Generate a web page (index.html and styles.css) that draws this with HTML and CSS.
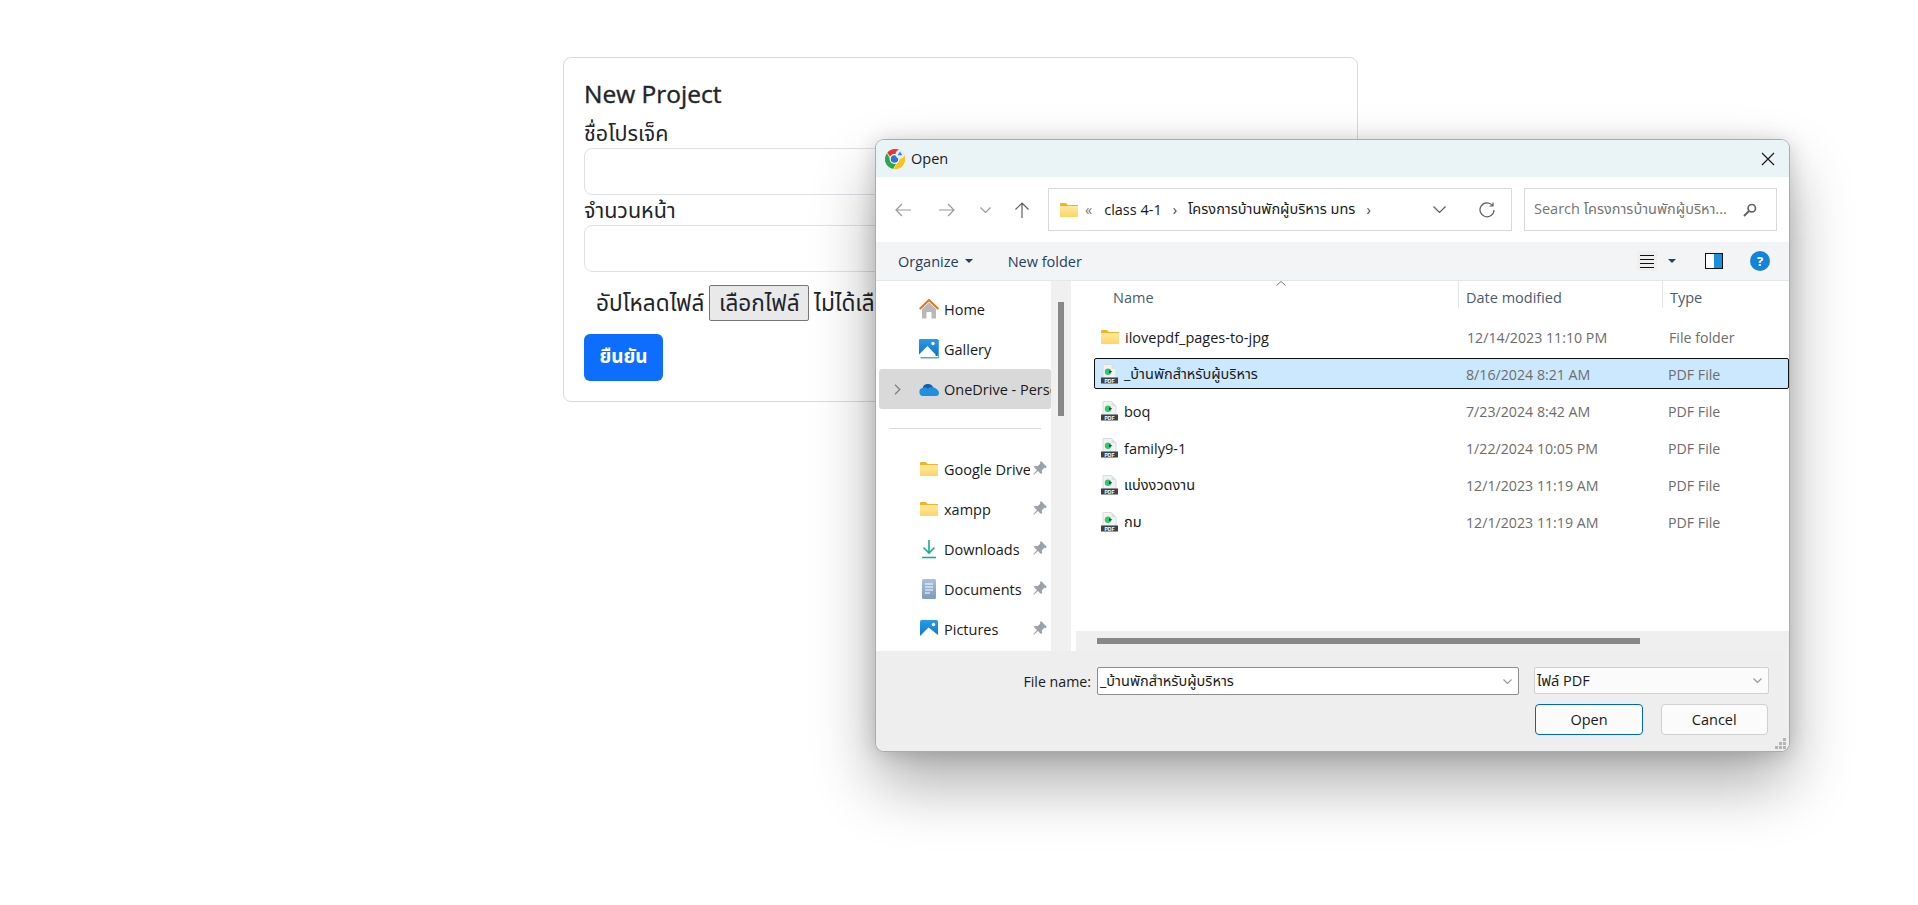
FILE: index.html
```html
<!DOCTYPE html>
<html lang="th">
<head>
  <meta charset="UTF-8" />
  <title>New Project</title>
  <link rel="stylesheet" href="styles.css">
</head>
<body>
  <svg class="sprites" width="0" height="0">
    <defs>
      <linearGradient id="folderFill" x1="0" y1="0" x2="0" y2="1">
        <stop offset="0" stop-color="#ffe9a0"/>
        <stop offset="1" stop-color="#fcd565"/>
      </linearGradient>
      <linearGradient id="paneFill" x1="0" y1="0" x2="0" y2="1">
        <stop offset="0" stop-color="#2b9be6"/>
        <stop offset="1" stop-color="#0d74c9"/>
      </linearGradient>
      <linearGradient id="docFill" x1="0" y1="0" x2="0" y2="1">
        <stop offset="0" stop-color="#a9c0da"/>
        <stop offset="1" stop-color="#7d9cc0"/>
      </linearGradient>
    </defs>
    <symbol id="folder" viewBox="0 0 18 14">
      <path d="M0 1.2C0 .5.5 0 1.2 0h4.6l2 2H18v2H0z" fill="#f5b324"/>
      <path d="M0 3h18v10c0 .6-.4 1-1 1H1c-.6 0-1-.4-1-1z" fill="url(#folderFill)"/>
    </symbol>
    <symbol id="pdf" viewBox="0 0 17 20">
      <path d="M2 .5h8.500L15 5v9H2z" fill="#f2f2f2" stroke="#dcdcdc"/>
      <path d="M10.500 .5V5H15z" fill="#dfdfdf"/>
      <circle cx="7" cy="7.800" r="3.200" fill="#2ec870"/>
      <path d="M8 6.300l3.400 1.500-3.400 1.500z" fill="#24384a"/>
      <rect x="0" y="13.500" width="17" height="6" fill="#3d4248"/>
    </symbol>
    <symbol id="pin" viewBox="0 0 14 14">
      <path d="M8 0L14 6L12.400 7L11.200 6.700L8.800 9.600L9.200 12L7.900 13.100L5 10L.9 13.800L.3 13.200L4 9L.9 6.100L2 4.800L4.400 5.200L7.300 2.800L7 1.600Z" fill="#9aa1a7"/>
    </symbol>
  </svg>

  <main class="page">
    <form class="card">
      <h1 class="card-title">New Project</h1>
      <label class="field-label">ชื่อโปรเจ็ค</label>
      <input class="field-input" type="text">
      <label class="field-label">จำนวนหน้า</label>
      <input class="field-input" type="text">
      <div class="upload-row">
        <span>อัปโหลดไฟล์</span>
        <span class="file-btn">เลือกไฟล์</span>
        <span>ไม่ได้เลือกไฟล์ใด</span>
      </div>
      <button class="submit-btn" type="button">ยืนยัน</button>
    </form>
  </main>

  <section class="dialog">
    <div class="titlebar">
      <svg class="chrome-icon" viewBox="0 0 20 20" width="20" height="20">
        <path d="M10 0a10 10 0 0 1 8.660 5H10a5 5 0 0 0-4.700 3.300L2.300 3.500A10 10 0 0 1 10 0z" fill="#e5392f"/>
        <path d="M1.900 4.200L6.200 11.500a5 5 0 0 0 4.800 3.400L8 20A10 10 0 0 1 1.900 4.200z" fill="#30a64c"/>
        <path d="M18.700 5A10 10 0 0 1 8.700 20l4.300-7.500a5 5 0 0 0 0-7.500z" fill="#fbc21a"/>
        <circle cx="9.500" cy="10" r="4.900" fill="#fff"/>
        <circle cx="9.500" cy="10" r="3.800" fill="#2f74d8"/>
        <circle cx="15" cy="5.300" r="4.500" fill="#e4eef6"/>
        <path d="M15 2.500l2.400 3.800h-4.800z" fill="#3f7fdc"/>
      </svg>
      <span class="titlebar-text">Open</span>
      <svg class="close-icon" viewBox="0 0 14 14" width="14" height="14"><path d="M1 1l12 12M13 1L1 13" stroke="#1a1a1a" stroke-width="1.200" fill="none"/></svg>
    </div>

    <div class="navbar">
      <svg class="nav-back" viewBox="0 0 16 14" width="16" height="14"><path d="M7 1L1 7l6 6M1 7h15" class="line-grey"/></svg>
      <svg class="nav-forward" viewBox="0 0 16 14" width="16" height="14"><path d="M9 1l6 6-6 6M15 7H0" class="line-grey"/></svg>
      <svg class="nav-down" viewBox="0 0 11 6" width="11" height="6"><path d="M.5.5l5 5 5-5" class="line-grey"/></svg>
      <svg class="nav-up" viewBox="0 0 16 16" width="16" height="16"><path d="M1.500 7.500L8 1l6.500 6.500M8 1v15" class="line-dark"/></svg>
      <div class="address">
        <svg class="address-folder" width="18" height="14"><use href="#folder"/></svg>
        <span class="crumb-more">«</span>
        <span class="crumb">class 4-1</span>
        <span class="crumb-sep">›</span>
        <span class="crumb">โครงการบ้านพักผู้บริหาร มทร</span>
        <span class="crumb-sep">›</span>
        <svg class="address-chevron" viewBox="0 0 13 7" width="13" height="7"><path d="M.5.500l6 6 6-6" class="line-dark"/></svg>
        <svg class="address-refresh" viewBox="0 0 16 16" width="16" height="16"><path d="M13.500 3.500A7 7 0 1 0 15 8M14 .5v3.500h-3.500" class="line-dark"/></svg>
      </div>
      <div class="search">
        <span class="search-text">Search โครงการบ้านพักผู้บริหา...</span>
        <svg viewBox="0 0 14 14" width="14" height="14"><circle cx="8.800" cy="5.200" r="3.700" fill="none" stroke="#5f6368" stroke-width="1.700"/><path d="M6 8L1 13" stroke="#5f6368" stroke-width="2"/></svg>
      </div>
    </div>

    <div class="toolbar">
      <span class="tool-btn">Organize</span>
      <span class="caret"></span>
      <span class="tool-btn new-folder">New folder</span>
      <span class="view-btn"><i></i><i></i><i></i><i></i></span>
      <span class="caret caret-view"></span>
      <span class="pane-btn"></span>
      <span class="help-btn">?</span>
    </div>

    <div class="browser">
      <nav class="sidebar">
        <div class="side-item">
          <svg class="side-icon" viewBox="0 0 20 20" width="20" height="20"><path d="M3 10l7-6.500 7 6.500v9.500h-4.500V13h-5v6.500H3z" fill="#b9b9b9"/><path d="M.7 10L10 1l9.300 9" fill="none" stroke="#e8711a" stroke-width="2"/></svg>
          <span>Home</span>
        </div>
        <div class="side-item">
          <svg class="side-icon" viewBox="0 0 20 20" width="20" height="20"><rect x="0" y="0" width="19" height="17" rx="1" fill="url(#paneFill)"/><path d="M19 1h1v17.500a1 1 0 0 1-1 1H1.500V18H19z" fill="#5aa7df"/><path d="M0 15.500L8.500 7l8 8.500V17H0z" fill="#fff"/><circle cx="14" cy="4.500" r="1.700" fill="#fff"/></svg>
          <span>Gallery</span>
        </div>
        <div class="side-item side-item-active">
          <svg class="side-chevron" viewBox="0 0 7 11" width="7" height="11"><path d="M1 .7L5.800 5.500 1 10.300" class="line-mid"/></svg>
          <svg class="side-icon" viewBox="0 0 20 13" width="20" height="13"><path d="M3.500 6a5.500 5.500 0 0 1 10.500-1.800A4 4 0 0 1 17 6.500L8 10z" fill="#0f5fb0"/><path d="M4 13a4 4 0 0 1-.4-7.900A4 4 0 0 1 9 5.700a3.500 3.500 0 0 1 5-.7c2.300-.4 6 1.800 6 5 0 1.700-1.300 3-3 3z" fill="#1f8fe0"/></svg>
          <span class="side-clip">OneDrive - Personal</span>
        </div>
        <div class="side-divider"></div>
        <div class="side-item">
          <svg class="side-icon" width="18" height="14"><use href="#folder"/></svg>
          <span class="side-clip-pin">Google Drive</span>
          <svg class="side-pin" width="14" height="14"><use href="#pin"/></svg>
        </div>
        <div class="side-item">
          <svg class="side-icon" width="18" height="14"><use href="#folder"/></svg>
          <span>xampp</span>
          <svg class="side-pin" width="14" height="14"><use href="#pin"/></svg>
        </div>
        <div class="side-item">
          <svg class="side-icon" viewBox="0 0 20 20" width="20" height="20"><path d="M10 1v13M4.500 8.500L10 14l5.500-5.500" fill="none" stroke="#14b08f" stroke-width="1.600"/><path d="M3 18.500h14" stroke="#14b08f" stroke-width="1.600"/></svg>
          <span>Downloads</span>
          <svg class="side-pin" width="14" height="14"><use href="#pin"/></svg>
        </div>
        <div class="side-item">
          <svg class="side-icon" viewBox="0 0 20 20" width="20" height="20"><rect x="3" y="0" width="14" height="20" rx="1.500" fill="url(#docFill)"/><path d="M6 5h8M6 8h8M6 11h8M6 14h5" stroke="#fff" stroke-width="1"/></svg>
          <span>Documents</span>
          <svg class="side-pin" width="14" height="14"><use href="#pin"/></svg>
        </div>
        <div class="side-item">
          <svg class="side-icon" viewBox="0 0 18 18" width="18" height="18"><rect width="18" height="18" rx="1.500" fill="url(#paneFill)"/><path d="M0 16L8.500 7.500 18 15v3H0z" fill="#fff"/><circle cx="13.500" cy="4.500" r="1.700" fill="#fff"/></svg>
          <span>Pictures</span>
          <svg class="side-pin" width="14" height="14"><use href="#pin"/></svg>
        </div>
      </nav>
      <div class="side-scroll"><div class="side-thumb"></div></div>

      <div class="files">
        <div class="file-head">
          <svg class="sort-arrow" viewBox="0 0 10 5" width="10" height="5"><path d="M.5 4.500L5 .5l4.500 4" fill="none" stroke="#777" stroke-width="1"/></svg>
          <span class="col-name">Name</span>
          <span class="col-date">Date modified</span>
          <span class="col-type">Type</span>
        </div>
        <div class="file-list">
          <div class="file-row">
            <svg class="file-icon folder-icon" width="18" height="14"><use href="#folder"/></svg>
            <span class="file-name">ilovepdf_pages-to-jpg</span>
            <span class="file-date">12/14/2023 11:10 PM</span>
            <span class="file-type">File folder</span>
          </div>
          <div class="file-row file-row-selected">
            <svg class="file-icon" viewBox="0 0 17 20" width="17" height="20"><use href="#pdf" width="17" height="20"/><text x="8.500" y="18.500" class="pdf-tag">PDF</text></svg>
            <span class="file-name">_บ้านพักสำหรับผู้บริหาร</span>
            <span class="file-date">8/16/2024 8:21 AM</span>
            <span class="file-type">PDF File</span>
          </div>
          <div class="file-row">
            <svg class="file-icon" viewBox="0 0 17 20" width="17" height="20"><use href="#pdf" width="17" height="20"/><text x="8.500" y="18.500" class="pdf-tag">PDF</text></svg>
            <span class="file-name">boq</span>
            <span class="file-date">7/23/2024 8:42 AM</span>
            <span class="file-type">PDF File</span>
          </div>
          <div class="file-row">
            <svg class="file-icon" viewBox="0 0 17 20" width="17" height="20"><use href="#pdf" width="17" height="20"/><text x="8.500" y="18.500" class="pdf-tag">PDF</text></svg>
            <span class="file-name">family9-1</span>
            <span class="file-date">1/22/2024 10:05 PM</span>
            <span class="file-type">PDF File</span>
          </div>
          <div class="file-row">
            <svg class="file-icon" viewBox="0 0 17 20" width="17" height="20"><use href="#pdf" width="17" height="20"/><text x="8.500" y="18.500" class="pdf-tag">PDF</text></svg>
            <span class="file-name">แบ่งงวดงาน</span>
            <span class="file-date">12/1/2023 11:19 AM</span>
            <span class="file-type">PDF File</span>
          </div>
          <div class="file-row">
            <svg class="file-icon" viewBox="0 0 17 20" width="17" height="20"><use href="#pdf" width="17" height="20"/><text x="8.500" y="18.500" class="pdf-tag">PDF</text></svg>
            <span class="file-name">กม</span>
            <span class="file-date">12/1/2023 11:19 AM</span>
            <span class="file-type">PDF File</span>
          </div>
        </div>
        <div class="hscroll"><div class="hscroll-thumb"></div></div>
      </div>
    </div>

    <div class="dialog-footer">
      <div class="footer-row">
        <span class="footer-label">File name:</span>
        <div class="name-box">
          <span class="box-text">_บ้านพักสำหรับผู้บริหาร</span>
          <svg viewBox="0 0 9 5" width="9" height="5"><path d="M.5.500l4 4 4-4" class="line-grey"/></svg>
        </div>
        <div class="type-box">
          <span class="box-text">ไฟล์ PDF</span>
          <svg viewBox="0 0 9 5" width="9" height="5"><path d="M.5.500l4 4 4-4" class="line-grey"/></svg>
        </div>
      </div>
      <div class="footer-row footer-actions">
        <button class="dlg-btn dlg-btn-primary" type="button">Open</button>
        <button class="dlg-btn" type="button">Cancel</button>
      </div>
      <svg class="grip" viewBox="0 0 11 11" width="11" height="11">
        <path d="M8 0h3v3H8zM4 4h3v3H4zM8 4h3v3H8zM0 8h3v3H0zM4 8h3v3H4zM8 8h3v3H8z" fill="#b4b4b4"/>
      </svg>
    </div>
  </section>
</body>
</html>
```

FILE: styles.css
```css
* {
  box-sizing: border-box;
}

html, body {
  margin: 0;
  padding: 0;
  height: 100%;
  overflow: hidden;
  background: #fff;
  font-family: 'Open Sans', 'Noto Sans', 'Noto Sans Thai', sans-serif;
  color: #212529;
}

.sprites {
  position: absolute;
}

.pdf-tag {
  font-family: 'Liberation Sans', sans-serif;
  font-size: 5px;
  font-weight: bold;
  fill: #fff;
  text-anchor: middle;
}

.line-grey {
  fill: none;
  stroke: #9a9a9a;
  stroke-width: 1.2;
}

.line-mid {
  fill: none;
  stroke: #858585;
  stroke-width: 1.4;
}

.line-dark {
  fill: none;
  stroke: #5e5e5e;
  stroke-width: 1.2;
}

/* web page behind the dialog */

.page {
  padding: 57px 0 0 563px;
}

.card {
  width: 795px;
  height: 345px;
  padding: 20px;
  border: 1px solid #d9dadb;
  border-radius: 8px;
}

.card-title {
  margin: 0 0 8px;
  font-size: 24.5px;
  font-weight: 500;
  line-height: 32px;
  -webkit-text-stroke: 0.4px #212529;
}

.field-label {
  display: block;
  height: 30px;
  font-size: 21.500px;
  line-height: 30px;
}

.field-input {
  display: block;
  width: 100%;
  height: 47px;
  border: 1px solid #dee2e6;
  border-radius: 8px;
}

.upload-row {
  display: flex;
  align-items: center;
  gap: 5px;
  height: 36px;
  margin: 13px 0 13px 12px;
  font-size: 22.600px;
  line-height: 34px;
  white-space: nowrap;
}

.file-btn {
  height: 36px;
  padding: 0 8.500px;
  background: #e9e9e9;
  border: 1px solid #767676;
  border-radius: 2px;
}

.submit-btn {
  width: 79px;
  height: 47px;
  background: #0d6efd;
  color: #fff;
  border: none;
  border-radius: 6px;
  font-family: inherit;
  font-size: 19px;
  font-weight: bold;
}

/* file dialog window */

.dialog {
  position: absolute;
  left: 876px;
  top: 140px;
  width: 913px;
  height: 611px;
  display: flex;
  flex-direction: column;
  overflow: hidden;
  border-radius: 8px;
  font-size: 14.5px;
  color: #1a1a1a;
  box-shadow: 0 0 0 1px #a9abad, 0 32px 64px rgba(0, 0, 0, 0.33), 0 2px 21px rgba(0, 0, 0, 0.18);
}

.titlebar {
  display: flex;
  align-items: center;
  height: 37px;
  padding: 0 14px 0 9px;
  background: #eaf4f7;
  flex-shrink: 0;
}

.titlebar-text {
  margin-left: 6px;
  flex: 1;
}

.navbar {
  display: flex;
  align-items: center;
  height: 65px;
  padding-left: 19px;
  background: #fff;
  flex-shrink: 0;
}

.nav-forward {
  margin-left: 28px;
}

.nav-down {
  margin-left: 25px;
}

.nav-up {
  margin-left: 23px;
}

.address {
  display: flex;
  align-items: center;
  width: 464px;
  height: 43px;
  margin-left: 18px;
  padding: 0 16px 0 11px;
  border: 1px solid #d9d9d9;
}

.crumb-more {
  margin: 0 12px 0 7px;
  color: #777;
}

.crumb-sep {
  margin: 0 11px;
  color: #444;
}

.address-chevron {
  margin-left: auto;
}

.address-refresh {
  margin-left: 33px;
}

.search {
  display: flex;
  align-items: center;
  justify-content: space-between;
  width: 253px;
  height: 43px;
  margin-left: 12px;
  padding: 0 19px 0 9px;
  border: 1px solid #d9d9d9;
  color: #767676;
}

.search-text {
  white-space: nowrap;
  overflow: hidden;
}

.toolbar {
  display: flex;
  align-items: center;
  height: 39px;
  padding-left: 22px;
  background: #f3f4f6;
  border-bottom: 1px solid #e6e6e6;
  color: #24405f;
  flex-shrink: 0;
}

.caret {
  width: 0;
  height: 0;
  margin-left: 6px;
  border-left: 4px solid transparent;
  border-right: 4px solid transparent;
  border-top: 4px solid #24405f;
}

.new-folder {
  margin-left: 35px;
}

.view-btn {
  display: flex;
  flex-direction: column;
  justify-content: center;
  gap: 3px;
  width: 20px;
  height: 20px;
  margin-left: auto;
  padding: 0 3px;
  background: #efefef;
}

.view-btn i {
  height: 1px;
  background: #111;
}

.caret-view {
  margin-left: 11px;
}

.pane-btn {
  width: 18px;
  height: 16px;
  margin-left: 29px;
  border: 1px solid #111;
  background: linear-gradient(90deg, #fff 50%, #1b8ee0 50%);
}

.help-btn {
  width: 20px;
  height: 20px;
  margin: 0 19px 0 27px;
  border-radius: 50%;
  background: #1284dc;
  color: #fff;
  font-size: 13px;
  font-weight: bold;
  line-height: 20px;
  text-align: center;
}

.browser {
  display: flex;
  height: 370px;
  background: #fff;
  flex-shrink: 0;
}

.sidebar {
  width: 175px;
  padding: 8px 0 0 3px;
  overflow: hidden;
  flex-shrink: 0;
}

.side-item {
  position: relative;
  display: flex;
  align-items: center;
  height: 40px;
  padding-left: 40px;
  white-space: nowrap;
}

.side-item-active {
  background: #d9d9d9;
  border-radius: 3px;
  overflow: hidden;
}

.side-chevron {
  position: absolute;
  left: 15px;
  top: 15px;
}

.side-icon {
  flex: none;
  width: 20px;
  margin-right: 5px;
}

.side-clip-pin {
  display: block;
  width: 86px;
  overflow: hidden;
}

.side-pin {
  position: absolute;
  left: 154px;
  top: 12px;
}

.side-divider {
  height: 1px;
  margin: 19px 10px 20px 10px;
  background: #d9d9d9;
}

.side-scroll {
  width: 20px;
  padding: 21px 7px 0;
  background: #f0f0f0;
  flex-shrink: 0;
}

.side-thumb {
  width: 6px;
  height: 114px;
  background: #888;
}

.files {
  position: relative;
  flex: 1;
  margin-left: 2px;
  display: flex;
  flex-direction: column;
  overflow: hidden;
}

.file-head {
  position: relative;
  height: 33px;
  flex-shrink: 0;
  color: #4b5b70;
}

.sort-arrow {
  position: absolute;
  left: 203px;
  top: 0;
}

.col-name,
.col-date,
.col-type {
  position: absolute;
  top: 7px;
}

.col-name {
  left: 40px;
}

.col-date {
  left: 385px;
  height: 27px;
  top: 0;
  padding: 7px 0 0 7px;
  border-left: 1px solid #e5e5e5;
}

.col-type {
  left: 589px;
  height: 27px;
  top: 0;
  padding: 7px 0 0 7px;
  border-left: 1px solid #e5e5e5;
}

.file-list {
  flex: 1;
  display: flex;
  flex-direction: column;
  gap: 6px;
  padding: 7px 0 0 21px;
}

.file-row {
  display: flex;
  align-items: center;
  height: 31px;
  padding-left: 6px;
  border: 1px solid transparent;
  white-space: nowrap;
}

.file-row-selected {
  background: #cce8ff;
  border-color: #111;
  border-radius: 2px;
}

.file-icon {
  flex: none;
  margin-right: 6px;
}

.file-name,
.file-date,
.file-type {
  padding-top: 2px;
}

.file-name {
  width: 342px;
  flex: none;
}

.file-date,
.file-type {
  color: #6d6d6d;
  font-size: 14.2px;
}

.file-date {
  width: 202px;
  flex: none;
}

.hscroll {
  height: 20px;
  margin-left: 3px;
  padding: 7px 0 0 21px;
  background: #efefef;
  flex-shrink: 0;
}

.hscroll-thumb {
  width: 543px;
  height: 6px;
  background: #888;
}

.dialog-footer {
  position: relative;
  flex: 1;
  padding: 16px 20px 0 0;
  background: #eee;
}

.footer-row {
  display: flex;
  align-items: center;
  justify-content: flex-end;
}

.footer-label {
  margin-right: 6px;
  font-size: 14.2px;
}

.name-box,
.type-box {
  display: flex;
  align-items: center;
  justify-content: space-between;
  background: #fff;
  padding: 0 6px 0 2px;
  border: 1px solid #8d8d8d;
  border-radius: 2px;
}

.box-text {
  padding-top: 2px;
}

.name-box {
  width: 422px;
  height: 28px;
}

.type-box {
  width: 235px;
  height: 27px;
  margin-left: 15px;
  background: #fbfbfb;
  border-color: #d0d0d0;
  align-self: flex-start;
}

.footer-actions {
  margin-top: 9px;
  gap: 17.500px;
  padding-right: 1px;
}

.dlg-btn {
  width: 107.500px;
  height: 31px;
  background: #fbfbfb;
  border: 1px solid #d0d0d0;
  border-radius: 4px;
  font-family: inherit;
  font-size: 14.5px;
  color: #1a1a1a;
}

.dlg-btn-primary {
  width: 108px;
  border-color: #0067c0;
}

.grip {
  position: absolute;
  right: 3px;
  bottom: 2px;
}
```
